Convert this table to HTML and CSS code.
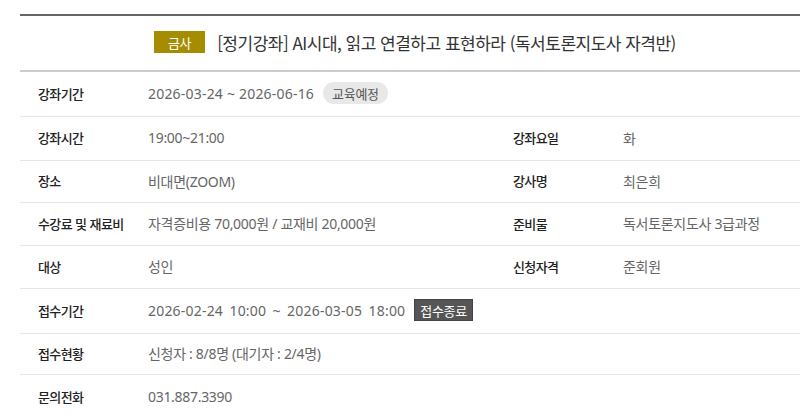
FILE: index.html
```html
<!DOCTYPE html>
<html lang="ko">
<head>
<meta charset="utf-8">
<link rel="stylesheet" href="styles.css">
</head>
<body>
<div class="page">
  <div class="info">
    <div class="title-row">
      <span class="cat">금사</span>
      <h2 class="title">[정기강좌] AI시대, 읽고 연결하고 표현하라 (독서토론지도사 자격반)</h2>
    </div>
    <div class="row r1">
      <div class="label">강좌기간</div>
      <div class="value wide"><span class="date">2026-03-24 ~ 2026-06-16</span><span class="pill">교육예정</span></div>
    </div>
    <div class="row r2">
      <div class="label">강좌시간</div>
      <div class="value">19:00~21:00</div>
      <div class="label">강좌요일</div>
      <div class="value">화</div>
    </div>
    <div class="row r3">
      <div class="label">장소</div>
      <div class="value">비대면(ZOOM)</div>
      <div class="label">강사명</div>
      <div class="value">최은희</div>
    </div>
    <div class="row r4">
      <div class="label">수강료 및 재료비</div>
      <div class="value">자격증비용 70,000원 / 교재비 20,000원</div>
      <div class="label">준비물</div>
      <div class="value">독서토론지도사 3급과정</div>
    </div>
    <div class="row r5">
      <div class="label">대상</div>
      <div class="value">성인</div>
      <div class="label">신청자격</div>
      <div class="value">준회원</div>
    </div>
    <div class="row r6">
      <div class="label">접수기간</div>
      <div class="value wide"><span class="date spaced">2026-02-24 10:00 ~ 2026-03-05 18:00</span><span class="closed">접수종료</span></div>
    </div>
    <div class="row r7">
      <div class="label">접수현황</div>
      <div class="value wide">신청자 : 8/8명 (대기자 : 2/4명)</div>
    </div>
    <div class="row r8">
      <div class="label">문의전화</div>
      <div class="value wide">031.887.3390</div>
    </div>
  </div>
</div>
</body>
</html>
```

FILE: styles.css
```css
* { box-sizing: border-box; }
html, body { margin: 0; padding: 0; background: #fff; }
body {
  font-family: "Noto Sans CJK KR", "Noto Sans", sans-serif;
  color: #333;
  overflow: hidden;
}
.page { padding: 14px 0 0 20px; }
.info { width: 780px; border-top: 2px solid #666; }

.title-row {
  height: 56px;
  border-bottom: 2px solid #ccc;
  display: flex;
  align-items: center;
  justify-content: center;
  gap: 12px;
  padding-left: 10px;
  padding-bottom: 2px;
}
.cat {
  display: inline-flex;
  align-items: center;
  justify-content: center;
  width: 51px;
  height: 22px;
  background: #a48d00;
  color: #fff;
  font-size: 13px;
  letter-spacing: -0.3px;
}
.title {
  margin: 0;
  font-size: 17px;
  font-weight: 400;
  color: #333;
  letter-spacing: -0.5px;
}

.row {
  display: grid;
  grid-template-columns: 110px 365px 110px 1fr;
  align-items: center;
  border-bottom: 1px solid #e6e6e6;
  padding-left: 18px;
  padding-bottom: 2px;
  font-size: 13px;
}
.r1 { height: 45px; }
.r2 { height: 44px; }
.r3 { height: 42px; }
.r4 { height: 43px; }
.r5 { height: 43px; }
.r6 { height: 45px; }
.r7 { height: 41px; }
.r8 { height: 44px; border-bottom: none; }

.label {
  font-weight: 500;
  color: #222;
  letter-spacing: -0.6px;
}
.value {
  font-family: "Noto Sans", "Noto Sans CJK KR", sans-serif;
  font-size: 14px;
  color: #666;
  letter-spacing: -0.3px;
  display: flex;
  align-items: center;
  white-space: nowrap;
}
.value.wide { grid-column: 2 / 5; }
.date { letter-spacing: 0.2px; }
.date.spaced { word-spacing: 2.5px; }

.pill {
  display: inline-flex;
  align-items: center;
  justify-content: center;
  margin-left: 9px;
  height: 22px;
  padding: 0 9px;
  border-radius: 11px;
  background: #e8e8e8;
  color: #555;
  font-family: "Noto Sans CJK KR", sans-serif;
  font-size: 13px;
}
.closed {
  display: inline-flex;
  align-items: center;
  justify-content: center;
  margin-left: 9px;
  height: 22px;
  padding: 0 5px;
  background: #555;
  border: 1px solid #444;
  color: #fff;
  font-family: "Noto Sans CJK KR", sans-serif;
  font-size: 13px;
}
```
